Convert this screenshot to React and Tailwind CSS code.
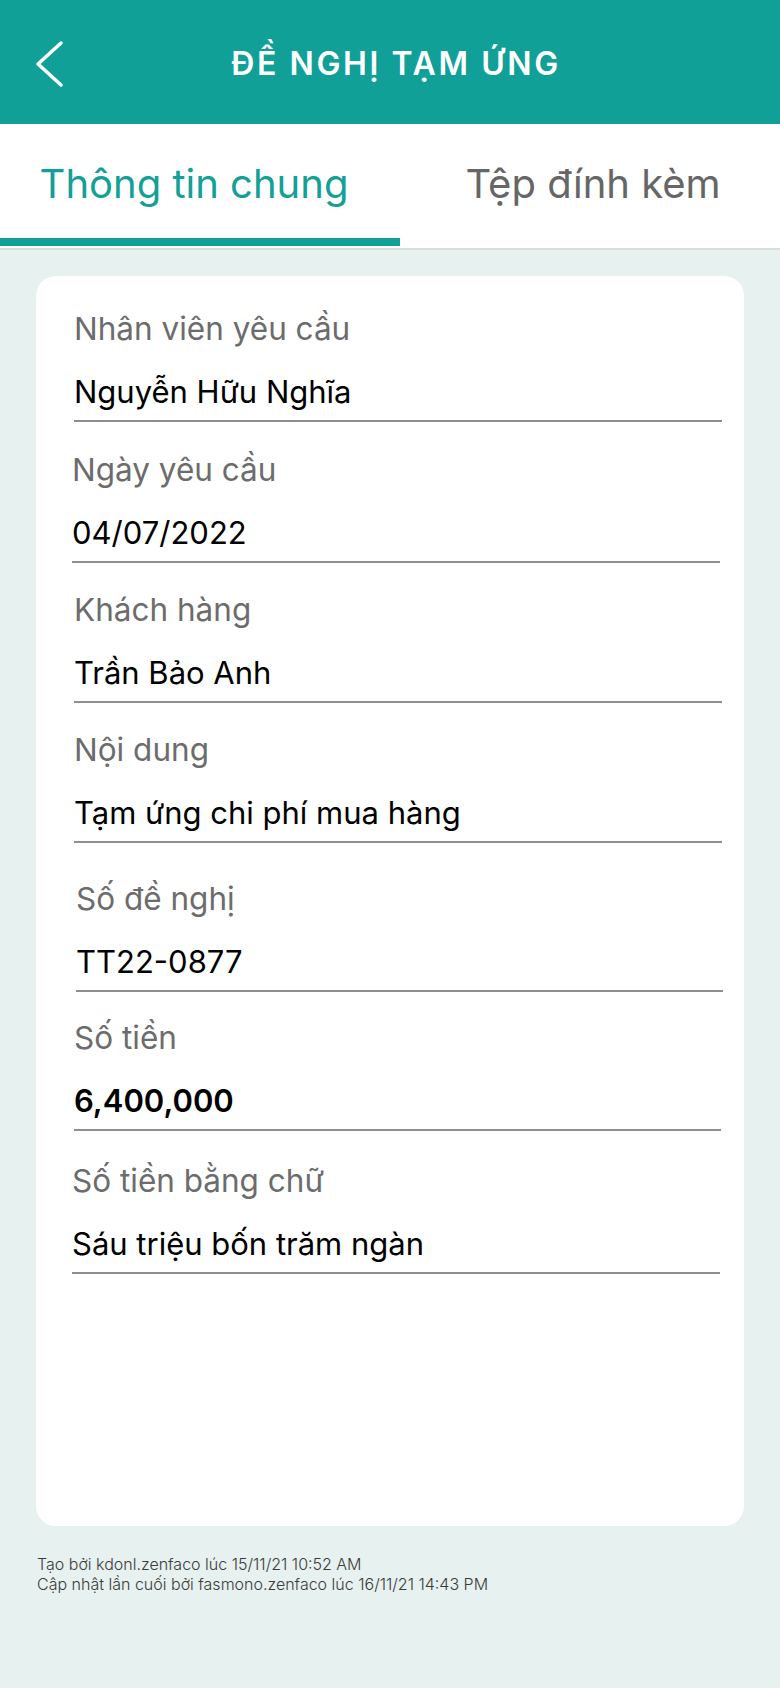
import React from "react";

const fields = [
  { label: "Nhân viên yêu cầu", value: "Nguyễn Hữu Nghĩa", box: "mt-0" },
  { label: "Ngày yêu cầu", value: "04/07/2022", box: "mt-[28px] -ml-[2px] mr-[2px]" },
  { label: "Khách hàng", value: "Trần Bảo Anh", box: "mt-[27px]" },
  { label: "Nội dung", value: "Tạm ứng chi phí mua hàng", box: "mt-[27px]" },
  { label: "Số đề nghị", value: "TT22-0877", box: "mt-[36px] ml-[2px] -mr-[1px]" },
  { label: "Số tiền", value: "6,400,000", box: "mt-[26px] mr-[1px]", bold: true },
  { label: "Số tiền bằng chữ", value: "Sáu triệu bốn trăm ngàn", box: "mt-[30px] -ml-[2px] mr-[2px]" },
];

function Field({ label, value, box, bold }) {
  return (
    <div className={"flex flex-col gap-[23px] pb-[8px] border-b-2 border-[#8e8e92] " + box}>
      <div className="text-[31.5px] leading-[40px] text-[#6c6c6c]">{label}</div>
      <div className={"text-[31px] leading-[40px] text-black " + (bold ? "font-semibold" : "")}>
        {value}
      </div>
    </div>
  );
}

export default function App() {
  return (
    <div
      className="min-h-[1688px] w-[780px] bg-[#e7f1ef]"
      style={{ fontFamily: "Inter, 'Noto Sans', sans-serif" }}
    >
      {/* header */}
      <div className="relative h-[124px] bg-[#10a098] pt-[45px] text-center">
        <svg
          className="absolute left-[34px] top-[39px]"
          width="32"
          height="50"
          viewBox="0 0 32 50"
          fill="none"
          stroke="white"
          strokeWidth="3.5"
          strokeLinecap="round"
          strokeLinejoin="round"
        >
          <path d="M27 4 L4 25 L27 46" />
        </svg>
        <div className="pl-[12px] text-[32px] font-semibold leading-[38px] tracking-[2.6px] text-white">
          ĐỀ NGHỊ TẠM ỨNG
        </div>
      </div>

      {/* tabs */}
      <div className="flex h-[126px] border-b-2 border-[#d9dddc] bg-white">
        <div className="flex w-[400px] flex-col">
          <div className="pt-[36px] pr-[12px] text-center text-[40px] leading-[48px] text-[#12a098]">
            Thông tin chung
          </div>
          <div className="mt-auto mb-[2px] h-[8px] bg-[#10a098]" />
        </div>
        <div className="flex-1 pt-[36px] pl-[6px] text-center text-[40px] leading-[48px] text-[#666666]">
          Tệp đính kèm
        </div>
      </div>

      {/* card */}
      <div className="mx-[36px] mt-[26px] h-[1250px] rounded-[20px] bg-white pt-[33px] pl-[38px] pr-[22px]">
        {fields.map((f) => (
          <Field key={f.label} {...f} />
        ))}
      </div>

      {/* footer */}
      <div className="mt-[28px] px-[37px] text-[16px] leading-[20px] font-light text-[#3a3a3a]">
        <div>Tạo bởi kdonl.zenfaco lúc 15/11/21 10:52 AM</div>
        <div>Cập nhật lần cuối bởi fasmono.zenfaco lúc 16/11/21 14:43 PM</div>
      </div>
    </div>
  );
}
